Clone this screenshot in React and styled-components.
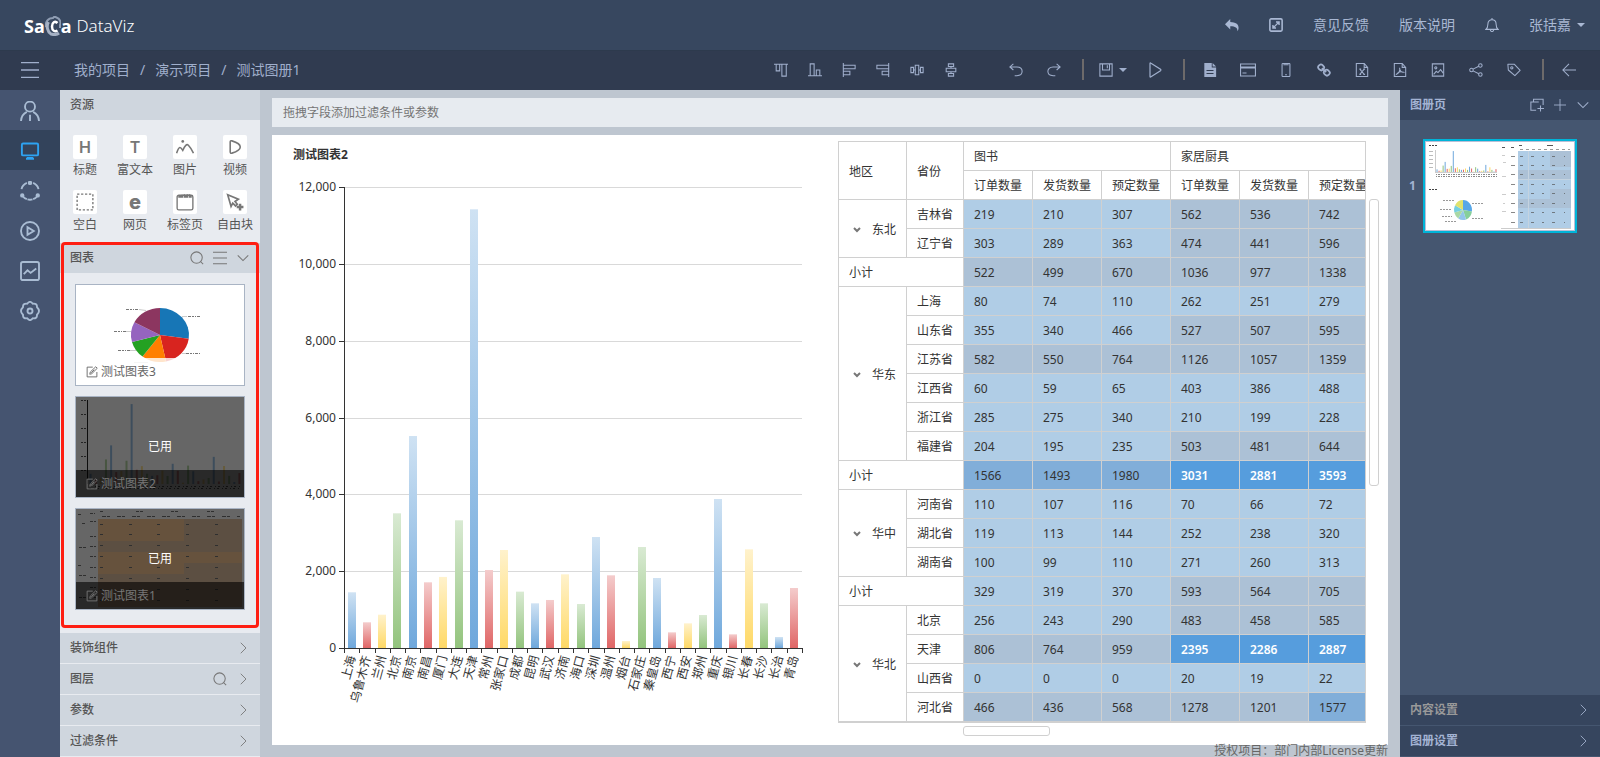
import { useState } from 'react';
import styled, { createGlobalStyle, css } from 'styled-components';

const cities = [
  ['上海', 1450],
  ['乌鲁木齐', 669],
  ['兰州', 867],
  ['北京', 3506],
  ['南京', 5518],
  ['南昌', 1710],
  ['厦门', 1850],
  ['大连', 3324],
  ['天津', 11419],
  ['常州', 2030],
  ['张家口', 2551],
  ['成都', 1467],
  ['昆明', 1163],
  ['武汉', 1250],
  ['济南', 1918],
  ['海口', 1145],
  ['深圳', 2889],
  ['温州', 1892],
  ['烟台', 182],
  ['石家庄', 2629],
  ['秦皇岛', 1822],
  ['西宁', 408],
  ['西安', 642],
  ['郑州', 859],
  ['重庆', 3878],
  ['银川', 356],
  ['长春', 2568],
  ['长沙', 1163],
  ['长治', 286],
  ['青岛', 1562],
];

const series = [
  { id: 'blue', from: '#cfe2f3', to: '#6fa8dc' },
  { id: 'red', from: '#f4cccc', to: '#e06666' },
  { id: 'yellow', from: '#fff2cc', to: '#ffd966' },
  { id: 'green', from: '#d9ead3', to: '#93c47d' },
];

const regions = [
  {
    name: '东北',
    rows: [
      ['吉林省', 219, 210, 307, 562, 536, 742],
      ['辽宁省', 303, 289, 363, 474, 441, 596],
    ],
    total: [522, 499, 670, 1036, 977, 1338],
  },
  {
    name: '华东',
    rows: [
      ['上海', 80, 74, 110, 262, 251, 279],
      ['山东省', 355, 340, 466, 527, 507, 595],
      ['江苏省', 582, 550, 764, 1126, 1057, 1359],
      ['江西省', 60, 59, 65, 403, 386, 488],
      ['浙江省', 285, 275, 340, 210, 199, 228],
      ['福建省', 204, 195, 235, 503, 481, 644],
    ],
    total: [1566, 1493, 1980, 3031, 2881, 3593],
  },
  {
    name: '华中',
    rows: [
      ['河南省', 110, 107, 116, 70, 66, 72],
      ['湖北省', 119, 113, 144, 252, 238, 320],
      ['湖南省', 100, 99, 110, 271, 260, 313],
    ],
    total: [329, 319, 370, 593, 564, 705],
  },
  {
    name: '华北',
    rows: [
      ['北京', 256, 243, 290, 483, 458, 585],
      ['天津', 806, 764, 959, 2395, 2286, 2887],
      ['山西省', 0, 0, 0, 20, 19, 22],
      ['河北省', 466, 436, 568, 1278, 1201, 1577],
    ],
  },
];

const measures = ['订单数量', '发货数量', '预定数量'];

// lower bounds of the three upper colour bands, one set for each measure
const bands = [
  [450, 1500, 2300],
  [420, 1400, 2200],
  [550, 1500, 2500],
];
const bandColors = ['#b0cde6', '#acc1d6', '#81aed9', '#569ddd'];
const getBand = (value, i) => bands[i % 3].filter((limit) => value >= limit).length;

/* ---------- icons ---------- */

const icons = {
  menu: <path d="M0 1.5h16M0 8h16M0 14.5h16" />,
  user: (
    <>
      <circle cx="8" cy="4.5" r="4" />
      <path d="M.8 16c.2-3.400 2-6 4.700-7.300M15.2 16c-.2-3.400-2-6-4.700-7.300M8 11v5" />
    </>
  ),
  monitor: (
    <>
      <rect x="1.500" y="2" width="13" height="9.500" rx="1" />
      <path d="M5.500 13.500h5M4.800 14.200h6.400" />
    </>
  ),
  ring: (
    <>
      <path d="M10.5 1.5a7 7 0 0 1 4.300 5M14 12a7 7 0 0 1-3.500 2.500M5.500 14.500A7 7 0 0 1 2 12M1.200 6.500a7 7 0 0 1 4.300-5M6 14.700q2 .6 4 0" />
      <circle cx="8" cy="1.500" r="1" fill="currentColor" />
      <circle cx="1.800" cy="11.500" r="1" fill="currentColor" />
      <circle cx="14.200" cy="11.500" r="1" fill="currentColor" />
    </>
  ),
  playCircle: (
    <>
      <circle cx="8" cy="8" r="7.200" />
      <path d="M6 5v6l5-3z" />
    </>
  ),
  trend: (
    <>
      <rect x=".8" y=".8" width="14.400" height="14.400" rx="1.500" />
      <path d="M3 10.5l3-3 2.500 2L13 6" />
    </>
  ),
  gear: (
    <>
      <path
        strokeLinejoin="round"
        d="M5.800 2.200Q8-.8 10.200 2.200Q13.800 1.700 13.600 5Q16.800 8 13.600 11Q13.800 14.300 10.200 13.800Q8 16.800 5.800 13.800Q2.200 14.300 2.400 11Q-.8 8 2.400 5Q2.200 1.700 5.800 2.200z"
      />
      <circle cx="8" cy="8" r="2" />
    </>
  ),
  reply: <path fill="currentColor" stroke="none" d="M6 1v3.500c6 .1 9.500 2.500 9.500 6.500 0 1.700-.6 3-1.300 4 .2-4-2.200-5.700-8.200-5.700V13L0 7z" />,
  expand: (
    <>
      <rect x="1" y="1" width="14" height="14" rx="1.500" strokeWidth="1.800" />
      <path d="M5 11l6-6M8 4.500h3.500V8M4.500 8v3.500H8" strokeWidth="1.600" />
    </>
  ),
  bell: (
    <>
      <path d="M1 13h14c-2-1.500-2.300-3-2.300-6C12.700 4 10.700 2 8 2S3.300 4 3.300 7c0 3-.3 4.500-2.300 6z" />
      <path d="M8 0v2M6 13.500c.3 2.600 3.700 2.600 4 0" />
    </>
  ),
  alignTop: <path d="M0 1.5h16M2.500 2v7h4V2M9 2v13h5V2" />,
  alignBottom: <path d="M0 14.500h16M2.500 14V1h4.500v13M9.500 14V8h4v6" />,
  alignLeft: <path d="M1.500 0v16M2 2.500h13v4H2M2 9.500h7v4H2" />,
  alignRight: <path d="M14.500 0v16M14 2.500H1v4h13M14 9.500H7v4h7" />,
  distributeH: <path d="M6 2.500h4v11H6zM1 5h3v6H1zM12 5h3v6h-3zM4 8h2M10 8h2" />,
  distributeV: <path d="M2.500 6h11v4h-11zM5 1h6v3H5zM5 12h6v3H5zM8 4v2M8 10v2" />,
  undo: <path d="M5 1L1 4.500 5 8M1.500 4.500H9c8 0 8 10 0 10H6.500" />,
  redo: <path d="M11 1l4 3.500L11 8M14.500 4.500H7c-8 0-8 10 0 10h2.500" />,
  save: (
    <>
      <path d="M1 1h14v14H1zM4 1v7h8V1" />
      <path d="M9.500 2.500V6" />
    </>
  ),
  play: <path d="M3 1.500v13q0 1 1 .3l9.500-6.100q.8-.7 0-1.400L4 1.200q-1-.7-1 .3z" />,
  doc: (
    <>
      <path fill="currentColor" stroke="none" d="M1.500 0H10v5h5v11H1.500zM11 0l4 4h-4z" />
      <path stroke="#303b50" d="M4 8.500h8M4 12h8" />
    </>
  ),
  card: <path d="M.5 2h15v12H.5zM0 5h16M0 6h16M2.500 11h4" />,
  phone: (
    <>
      <rect x="3.500" y=".5" width="9" height="15" rx="1" />
      <path d="M7 13.500h2M5 2h6" />
    </>
  ),
  link: (
    <>
      <rect x="1.500" y="2" width="6.500" height="6" rx="2.500" transform="rotate(45 4.700 5)" strokeWidth="2" />
      <rect x="8" y="8" width="6.500" height="6" rx="2.500" transform="rotate(45 11.200 11)" strokeWidth="2" />
      <path d="M5.500 6l5 4.500" strokeWidth="2" />
    </>
  ),
  excel: (
    <>
      <path d="M1.500.5h9l4 4.500v10.500h-13zM10.500.5V5h4" />
      <path d="M5.500 7l5 6M10.500 7l-5 6M5 7h2M9.500 7h2M5 13h2M9.500 13h2" />
    </>
  ),
  pdf: (
    <>
      <path d="M1.500.5h9l4 4.500v10.500h-13zM10.500.5V5h4" />
      <path d="M7.500 5.500c1 3-1 6.500-3.500 7.500 1.500-2.500 5-3.500 8-2.500-2 .5-4.500-1.500-4.500-5z" />
    </>
  ),
  picture: (
    <>
      <path d="M1.500 1h13v14h-13z" />
      <circle cx="5.500" cy="5.500" r="1.200" />
      <path d="M3 13l3-3.500L8 11l3-3.500 3 4" />
    </>
  ),
  share: (
    <>
      <circle cx="2.800" cy="8" r="2" />
      <circle cx="13" cy="2.800" r="2" />
      <circle cx="13" cy="13.200" r="2" />
      <path d="M4.600 7l6.600-3.300M4.600 9l6.600 3.300" />
    </>
  ),
  tag: (
    <>
      <path d="M1 1.500h7.500L15 8.500l-6 6L1.500 8z" strokeLinejoin="round" />
      <circle cx="5.500" cy="5.500" r="1.300" />
    </>
  ),
  back: <path d="M16 8H1M8 1L1 8l7 7" />,
  search: (
    <>
      <circle cx="7.500" cy="7.500" r="6.500" />
      <path d="M12 12l3 3" />
    </>
  ),
  down: <path d="M2 5l6 6 6-6" />,
  right: <path d="M5 1l7 7-7 7" />,
  plus: <path d="M8 0v16M0 8h16" />,
  addPage: <path d="M4 4V1.500h11V8M10 4.500H1V14h6M12 8.500v7M8.500 12H16" />,
  edit: <path d="M9 1.500H1.500v13h13V8M5 11l.7-3L13 1l2 2-7.300 7.300zM7 9l4-4" />,
  image: (
    <>
      <circle cx="6" cy="3" r="1.200" fill="currentColor" stroke="none" />
      <path d="M.5 13.500c2.500-7 3.500-5.500 5.500-2.500 2-4.500 3.500-6 5-4.500s3 4 4.500 7" strokeWidth="1.400" />
    </>
  ),
  video: <path d="M2.500 2.500v11q0 2 2 1.500c5-1.500 9.500-4.500 9.500-7S9.500 2.500 4.500 1q-2-.5-2 1.500z" strokeWidth="1.800" />,
  blank: <path d="M1 1h14v14H1z" strokeDasharray="2 1.500" />,
  tabs: (
    <>
      <rect x="1" y="2" width="14" height="13" rx="1.500" />
      <path d="M2 3.500h3.500v-2M7.500 1v2.500h2.500V1M12 1v2.500h2" strokeWidth="1.500" />
    </>
  ),
  freeBlock: (
    <>
      <path d="M1.500 1.500l9.500 4-3 2 2 2.500-1.500 1.500L6 9l-1.500 3z" strokeWidth="1.500" />
      <path d="M12.500 9.500v6M9.500 12.500h6" strokeWidth="2.200" />
    </>
  ),
};

const Icon = ({ name, size = 14 }) => (
  <Svg viewBox="0 0 16 16" $size={size} aria-hidden="true">
    {icons[name]}
  </Svg>
);

/* ---------- charts ---------- */

const CHART = { left: 72, top: 12, bottom: 473, width: 458 };

const BarChart = () => {
  const step = CHART.width / cities.length;
  const height = CHART.bottom - CHART.top;
  const ticks = [0, 2000, 4000, 6000, 8000, 10000, 12000];

  return (
    <ChartSvg viewBox="0 0 558 570" preserveAspectRatio="xMidYMin meet">
      <defs>
        {series.map((s) => (
          <linearGradient key={s.id} id={s.id} x1="0" y1="0" x2="0" y2="1">
            <stop offset="0" stopColor={s.from} />
            <stop offset="1" stopColor={s.to} />
          </linearGradient>
        ))}
      </defs>
      {ticks.map((value) => {
        const y = Math.round(CHART.bottom - (value / 12000) * height) + 0.5;
        return (
          <g key={value}>
            {value > 0 && <line x1={CHART.left} x2={CHART.left + CHART.width} y1={y} y2={y} stroke="#d9d9d9" />}
            <line x1={CHART.left - 5} x2={CHART.left} y1={y} y2={y} stroke="#333" />
            <text x={CHART.left - 8} y={y + 3} textAnchor="end">
              {value.toLocaleString('en-US')}
            </text>
          </g>
        );
      })}
      {cities.map(([name, value], i) => {
        const center = CHART.left + step * (i + 0.5);
        const h = (value / 12000) * height;
        return (
          <g key={name}>
            <rect x={Math.round(center - 4)} y={CHART.bottom - h} width="8" height={h} fill={`url(#${series[i % 4].id})`} />
            <text textAnchor="end" transform={`translate(${center + 4} ${CHART.bottom + 9}) rotate(-75)`}>
              {name}
            </text>
          </g>
        );
      })}
      <g stroke="#333">
        <line x1={CHART.left + 0.5} x2={CHART.left + 0.5} y1={CHART.top} y2={CHART.bottom + 1} />
        <line x1={CHART.left} x2={CHART.left + CHART.width} y1={CHART.bottom + 0.5} y2={CHART.bottom + 0.5} />
        {[...cities, null].map((_, i) => {
          const x = Math.round(CHART.left + step * i) + 0.5;
          return <line key={i} x1={x} x2={x} y1={CHART.bottom} y2={CHART.bottom + 5} />;
        })}
      </g>
    </ChartSvg>
  );
};

const Pie = ({ cx, cy, rx, ry, slices }) => {
  const point = (deg) => {
    const rad = (deg * Math.PI) / 180;
    return `${cx + rx * Math.sin(rad)} ${cy - ry * Math.cos(rad)}`;
  };
  return slices.map(([color, from, to]) => (
    <path key={color} fill={color} d={`M${cx} ${cy}L${point(from)}A${rx} ${ry} 0 0 1 ${point(to)}z`} />
  ));
};

const MiniBars = ({ x, y, width, height, bar }) =>
  cities.map(([name, value], i) => {
    const h = (value / 12000) * height;
    return (
      <rect
        key={name}
        x={x + (width / cities.length) * (i + 0.5) - bar / 2}
        y={y - h}
        width={bar}
        height={h}
        fill={series[i % 4].to}
      />
    );
  });

const PiePreview = () => (
  <PreviewSvg viewBox="0 0 168 100" preserveAspectRatio="none">
    <Pie
      cx={84}
      cy={50}
      rx={29}
      ry={27}
      slices={[
        ['#1776b6', 0, 98],
        ['#d8241f', 98, 168],
        ['#ff7f00', 168, 217],
        ['#24a122', 217, 255],
        ['#9564bf', 255, 298],
        ['#8c3660', 298, 360],
      ]}
    />
    <g stroke="#777" strokeDasharray="3 1 2 1 1 1">
      <path d="M50 24.500h13M112 31.500h12M110 68.500h14M38 46.500h12M42 65.500h12" />
    </g>
    <path d="M63 24.500l7 1M106 31.500h5M106 68.500h4M50 46.500h5M54 65.500h6M58 77.500h14" stroke="#ccc" />
  </PreviewSvg>
);

const BarPreview = () => (
  <PreviewSvg viewBox="0 0 168 100" preserveAspectRatio="none">
    <g opacity=".7">
      <MiniBars x={12} y={87} width={154} height={84} bar={2} />
    </g>
    <path d="M11.500 3v84" stroke="#222" />
    <path d="M5 3.500h5M5 17.500h5M5 31.500h5M5 45.500h5M5 59.500h5M5 73.500h5" stroke="#555" strokeDasharray="2 1" />
    <path d="M14 89.500h152M13 91.500h152" stroke="#666" strokeDasharray="2 3 1 2" />
  </PreviewSvg>
);

const TablePreview = () => (
  <PreviewSvg viewBox="0 0 168 100" preserveAspectRatio="none">
    <path d="M22 10h144v88H22z" fill="#ffcc99" />
    <path d="M108 10h58v22h-58zM22 32h144v11H22zM108 54h58v11h-58zM22 65h144v33H22z" fill="#e6c6a5" />
    <g stroke="#777" strokeDasharray="3 1">
      <path d="M24 2.500h4M60 2.500h8M95 2.500h8M131 2.500h8" />
      <path d="M26 7.500h138" strokeDasharray="4 1 3 7" />
      <path d="M2 5.500h3M14 4.500h5M14 12.500h6M14 27.500h6M14 37.500h6M14 47.500h6M14 58.500h6M14 68.500h6M14 78.500h6M14 88.500h6" />
      <path d="M6 14.500h4M3 38.500h7M2 56.500h4M3 66.500h7M3 88.500h7" />
      {[15, 25, 36, 47, 58, 69, 80, 91].map((y) => (
        <path key={y} d={`M24 ${y}.5h3M53 ${y}.5h3M81 ${y}.5h3M110 ${y}.5h3M139 ${y}.5h3`} />
      ))}
    </g>
  </PreviewSvg>
);

const PagePreview = () => (
  <PreviewSvg viewBox="0 0 148 88" preserveAspectRatio="none">
    <MiniBars x={10} y={30} width={61} height={22} bar={1} />
    <path d="M9.500 8v22M9 30.500h62" stroke="#ccc" />
    <path d="M3 3.500h8M3 47.500h8" stroke="#444" strokeDasharray="2 1" />
    <path d="M3 9.500h4M3 13.500h4M3 17.500h4M3 21.500h4M3 25.500h4" stroke="#bbb" />
    <path d="M10 32.500h61M10 34.500h61" stroke="#888" strokeDasharray="1 1 2 1" />
    <Pie
      cx={37}
      cy={68}
      rx={9}
      ry={10}
      slices={[
        ['#57a7e8', 0, 98],
        ['#86cf9b', 98, 160],
        ['#93c5ea', 160, 212],
        ['#a9d8a5', 212, 255],
        ['#76d0e0', 255, 298],
        ['#e0e26d', 298, 360],
      ]}
    />
    <path d="M17 58.500h12M46 61.500h12M46 76.500h12M14 67.500h12M16 74.500h10M19 79.500h12" stroke="#999" strokeDasharray="2 1" />
    <path d="M92 9h53v77H92z" fill="#b0cde6" />
    <path d="M124 9h21v16h-21zM92 28h53v9H92zM124 47h21v10h-21zM92 57h53v9H92z" fill="#acc1d6" />
    <path d="M102.500 9v77M92 37.500h53" stroke="#c4d3e0" />
    <g stroke="#555">
      <path d="M93 3.500h3M121 3.500h6" />
      <path d="M76 5.500h3M85 5.500h3" />
      <path d="M94 7.500h50" strokeDasharray="3 3" stroke="#999" />
      {[14, 23, 32, 42, 51, 61, 70, 80].map((y) => (
        <path key={y} d={`M85 ${y}.5h4M94 ${y}.5h3M105 ${y}.5h3M116 ${y}.5h2M126 ${y}.5h3M138 ${y}.5h1`} strokeOpacity=".7" />
      ))}
    </g>
    <path d="M76 13.500h3M77 20.500h3M76 34.500h4M76 52.500h4M77 61.500h2M76 69.500h4M75 86.500h70" stroke="#ccc" />
  </PreviewSvg>
);

/* ---------- page parts ---------- */

const PivotTable = () => (
  <TableArea>
    <TableFrame>
      <Table>
        <colgroup>
          <Col $width={68} />
          <Col $width={57} />
          <Col $width={69} span={6} />
        </colgroup>
        <thead>
          <tr>
            <HeadCell rowSpan={2}>地区</HeadCell>
            <HeadCell rowSpan={2}>省份</HeadCell>
            <HeadCell colSpan={3}>图书</HeadCell>
            <HeadCell colSpan={3}>家居厨具</HeadCell>
          </tr>
          <tr>
            {[...measures, ...measures].map((name, i) => (
              <HeadCell key={i}>{name}</HeadCell>
            ))}
          </tr>
        </thead>
        {regions.map((region) => (
          <tbody key={region.name}>
            {region.rows.map(([province, ...values], r) => (
              <tr key={province}>
                {r === 0 && (
                  <HeadCell rowSpan={region.rows.length}>
                    <RegionToggle type="button">
                      <ToggleMark viewBox="0 0 8 6" aria-hidden="true">
                        <path d="M1 1l3 3 3-3" />
                      </ToggleMark>
                      {region.name}
                    </RegionToggle>
                  </HeadCell>
                )}
                <HeadCell>{province}</HeadCell>
                {values.map((value, i) => (
                  <ValueCell key={i} $band={getBand(value, i)}>
                    {value}
                  </ValueCell>
                ))}
              </tr>
            ))}
            {region.total && (
              <tr>
                <HeadCell colSpan={2}>小计</HeadCell>
                {region.total.map((value, i) => (
                  <ValueCell key={i} $band={getBand(value, i)}>
                    {value}
                  </ValueCell>
                ))}
              </tr>
            )}
          </tbody>
        ))}
      </Table>
    </TableFrame>
    <ScrollV />
    <ScrollH />
  </TableArea>
);

const railItems = [
  ['user', '用户'],
  ['monitor', '图册'],
  ['ring', '关系'],
  ['playCircle', '播放'],
  ['trend', '分析'],
  ['gear', '设置'],
];

const resources = [
  { label: '标题', glyph: 'H' },
  { label: '富文本', glyph: 'T' },
  { label: '图片', icon: 'image', size: 18 },
  { label: '视频', icon: 'video', size: 14 },
  { label: '空白', icon: 'blank', size: 18 },
  { label: '网页', glyph: 'e', heavy: true },
  { label: '标签页', icon: 'tabs', size: 18 },
  { label: '自由块', icon: 'freeBlock', size: 18 },
];

const alignTools = [
  ['alignTop', '顶部对齐'],
  ['alignBottom', '底部对齐'],
  ['alignLeft', '左对齐'],
  ['alignRight', '右对齐'],
  ['distributeH', '水平分布'],
  ['distributeV', '垂直分布'],
];

const exportTools = [
  ['doc', '文档'],
  ['card', '卡片'],
  ['phone', '手机预览'],
  ['link', '链接'],
  ['excel', '导出Excel'],
  ['pdf', '导出PDF'],
  ['picture', '导出图片'],
  ['share', '分享'],
  ['tag', '标签'],
];

const charts = [
  { name: '测试图表3', preview: <PiePreview /> },
  { name: '测试图表2', preview: <BarPreview />, used: true },
  { name: '测试图表1', preview: <TablePreview />, used: true },
];

const App = () => {
  const [active, setActive] = useState('monitor');

  return (
    <>
      <GlobalStyle />
      <Page>
        <Header>
          <Logo href="#">
            <LogoStrong>Sa</LogoStrong>
            <LogoMark viewBox="0 0 16 20" aria-hidden="true">
              <path d="M1 11C0 6 3 2 8 2l1.500-1.500 2 1C15 3 16 6 15 9v3" fill="none" stroke="#8f9db3" strokeWidth="2" />
              <path d="M3.500 6C1 10 2.500 16 6 18c3 1 6 .5 8-1" fill="none" stroke="#a5b1c4" strokeWidth="3" />
              <path d="M12.500 7C10 4.500 7 6.500 7 10.500c0 4.500 3 5.500 5.500 4" fill="none" stroke="#fff" strokeWidth="2.500" />
            </LogoMark>
            <LogoStrong>a</LogoStrong>
            <LogoLight>DataViz</LogoLight>
          </Logo>
          <HeaderNav>
            <PlainButton aria-label="返回">
              <Icon name="reply" />
            </PlainButton>
            <PlainButton aria-label="全屏">
              <Icon name="expand" />
            </PlainButton>
            <NavLink href="#">意见反馈</NavLink>
            <NavLink href="#">版本说明</NavLink>
            <PlainButton aria-label="通知">
              <Icon name="bell" />
            </PlainButton>
            <PlainButton>
              张括嘉
              <Caret />
            </PlainButton>
          </HeaderNav>
        </Header>

        <Toolbar>
          <MenuButton aria-label="菜单">
            <Icon name="menu" size={18} />
          </MenuButton>
          <Breadcrumb>
            <NavLink href="#">我的项目</NavLink>
            <span>/</span>
            <NavLink href="#">演示项目</NavLink>
            <span>/</span>
            <NavLink href="#">测试图册1</NavLink>
          </Breadcrumb>
          <ToolGroup>
            {alignTools.map(([icon, label]) => (
              <ToolButton key={icon} $width={34} aria-label={label}>
                <Icon name={icon} />
              </ToolButton>
            ))}
          </ToolGroup>
          <ToolGroup $spaced>
            <ToolButton aria-label="撤销">
              <Icon name="undo" />
            </ToolButton>
            <ToolButton aria-label="重做">
              <Icon name="redo" />
            </ToolButton>
          </ToolGroup>
          <Divider />
          <ToolGroup>
            <ToolButton $width={46} aria-label="保存">
              <Icon name="save" />
              <Caret />
            </ToolButton>
            <ToolButton aria-label="预览">
              <Icon name="play" size={16} />
            </ToolButton>
          </ToolGroup>
          <Divider />
          <ToolGroup>
            {exportTools.map(([icon, label]) => (
              <ToolButton key={icon} aria-label={label}>
                <Icon name={icon} size={icon === 'card' ? 16 : 14} />
              </ToolButton>
            ))}
          </ToolGroup>
          <Divider />
          <ToolButton aria-label="返回上级">
            <Icon name="back" />
          </ToolButton>
        </Toolbar>

        <Body>
          <Rail>
            {railItems.map(([icon, label]) => (
              <RailButton key={icon} $active={icon === active} aria-label={label} onClick={() => setActive(icon)}>
                <Icon name={icon} size={20} />
              </RailButton>
            ))}
          </Rail>

          <SidePanel>
            <SectionHead>
              <SectionTitle>资源</SectionTitle>
            </SectionHead>
            <ResourceGrid>
              {resources.map(({ label, glyph, heavy, icon, size }) => (
                <Resource key={label}>
                  <Tile>{glyph ? <Glyph $heavy={heavy}>{glyph}</Glyph> : <Icon name={icon} size={size} />}</Tile>
                  {label}
                </Resource>
              ))}
            </ResourceGrid>

            <ChartSection>
              <SectionHead>
                <SectionTitle>图表</SectionTitle>
                <Action aria-label="搜索">
                  <Icon name="search" />
                </Action>
                <Action aria-label="列表">
                  <Icon name="menu" />
                </Action>
                <Action aria-label="收起">
                  <Icon name="down" />
                </Action>
              </SectionHead>
              <CardList>
                {charts.map(({ name, preview, used }) => (
                  <Card key={name}>
                    {preview}
                    {used && <UsedMask>已用</UsedMask>}
                    <Caption $used={used}>
                      <Icon name="edit" size={12} />
                      {name}
                    </Caption>
                  </Card>
                ))}
              </CardList>
              <Highlight />
            </ChartSection>

            {['装饰组件', '图层', '参数', '过滤条件'].map((title) => (
              <SectionHead key={title} $closed>
                <SectionTitle>{title}</SectionTitle>
                {title === '图层' && (
                  <Action aria-label="搜索图层">
                    <Icon name="search" />
                  </Action>
                )}
                <Action aria-label={`展开${title}`}>
                  <Icon name="right" size={12} />
                </Action>
              </SectionHead>
            ))}
          </SidePanel>

          <Canvas>
            <FilterBar>拖拽字段添加过滤条件或参数</FilterBar>
            <Sheet>
              <ChartArea>
                <ChartTitle>测试图表2</ChartTitle>
                <BarChart />
              </ChartArea>
              <PivotTable />
            </Sheet>
            <License>授权项目：部门内部License更新</License>
          </Canvas>

          <PagePanel>
            <PageHead>
              <SectionTitle>图册页</SectionTitle>
              <Action $light aria-label="复制页">
                <Icon name="addPage" />
              </Action>
              <Action $light aria-label="新增页">
                <Icon name="plus" size={12} />
              </Action>
              <Action $light aria-label="收起">
                <Icon name="down" />
              </Action>
            </PageHead>
            <PageList>
              <li>
                <span>1</span>
                <PageThumb aria-label="第1页">
                  <PagePreview />
                </PageThumb>
              </li>
            </PageList>
            <PageHead $closed $muted>
              <SectionTitle>内容设置</SectionTitle>
              <Action $light aria-label="展开内容设置">
                <Icon name="right" size={12} />
              </Action>
            </PageHead>
            <PageHead $closed>
              <SectionTitle>图册设置</SectionTitle>
              <Action $light aria-label="展开图册设置">
                <Icon name="right" size={12} />
              </Action>
            </PageHead>
          </PagePanel>
        </Body>
      </Page>
    </>
  );
};

/* ---------- styles ---------- */

const GlobalStyle = createGlobalStyle`
  * {
    box-sizing: border-box;
  }
  body {
    margin: 0;
    font-family: 'Noto Sans', 'Noto Sans CJK SC', sans-serif;
    font-size: 12px;
    line-height: 16px;
    color: #333;
  }
  button {
    margin: 0;
    padding: 0;
    border: 0;
    background: none;
    color: inherit;
    font: inherit;
    cursor: pointer;
  }
  a {
    color: inherit;
    text-decoration: none;
  }
`;

const Svg = styled.svg`
  flex: none;
  display: block;
  width: ${(p) => p.$size}px;
  height: ${(p) => p.$size}px;
  fill: none;
  stroke: currentColor;
  stroke-width: 1.2;
`;

const Page = styled.div`
  display: flex;
  flex-direction: column;
  height: 100vh;
  overflow: hidden;
`;

const Header = styled.header`
  flex: none;
  display: flex;
  align-items: center;
  justify-content: space-between;
  height: 50px;
  padding: 0 15px 0 24px;
  background: #37475f;
  color: #a9b8d3;
  font-size: 14px;
`;

const Logo = styled.a`
  display: flex;
  align-items: center;
  color: #fff;
  line-height: 24px;
  padding-top: 2px;
`;

const LogoStrong = styled.strong`
  font-size: 18px;
  font-weight: 700;
`;

const LogoMark = styled.svg`
  width: 16px;
  height: 20px;
`;

const LogoLight = styled.span`
  margin-left: 5px;
  font-size: 17px;
  font-weight: 300;
`;

const HeaderNav = styled.nav`
  display: flex;
  align-items: center;
  gap: 30px;
`;

const NavLink = styled.a`
  white-space: nowrap;
`;

const PlainButton = styled.button`
  display: flex;
  align-items: center;
  gap: 6px;
`;

const Caret = styled.span`
  border: 4px solid transparent;
  border-top-color: currentColor;
  border-bottom-width: 0;
`;

const Toolbar = styled.div`
  flex: none;
  display: flex;
  align-items: center;
  height: 40px;
  padding: 0 12px 2px 0;
  background: #303b50;
  border-top: 1px solid #2d3a4d;
  color: #a0afcc;
`;

const MenuButton = styled.button`
  display: flex;
  justify-content: center;
  width: 60px;
`;

const Breadcrumb = styled.nav`
  flex: 1;
  display: flex;
  gap: 10px;
  padding-left: 14px;
  font-size: 14px;
`;

const ToolGroup = styled.div`
  display: flex;
  margin-left: ${(p) => (p.$spaced ? 29 : 0)}px;
`;

const ToolButton = styled.button`
  display: flex;
  align-items: center;
  justify-content: center;
  gap: 6px;
  width: ${(p) => p.$width || 38}px;
  height: 24px;
`;

const Divider = styled.span`
  width: 2px;
  height: 21px;
  margin: 0 6px 0 9px;
  background: #6d6a6a;
`;

const Body = styled.div`
  flex: 1;
  display: flex;
  min-height: 0;
`;

const Rail = styled.nav`
  flex: none;
  width: 60px;
  background: #455470;
`;

const RailButton = styled.button`
  display: flex;
  align-items: center;
  justify-content: center;
  width: 100%;
  height: 40px;
  padding-top: 2px;
  color: #a9bcd3;

  svg {
    stroke-width: 1.5;
  }

  ${(p) =>
    p.$active &&
    css`
      background: #33435b;
      color: #2ea3f2;
    `}
`;

const SidePanel = styled.aside`
  flex: none;
  display: flex;
  flex-direction: column;
  width: 200px;
  background: #e8ebf0;
  color: #555;
`;

const SectionHead = styled.div`
  flex: none;
  display: flex;
  align-items: center;
  gap: 9px;
  height: ${(p) => (p.$closed ? 31 : 30)}px;
  padding: 0 10px;
  background: #cfd6de;
  border-bottom: ${(p) => (p.$closed ? '1px solid #e8ebf0' : '0')};
`;

const SectionTitle = styled.h2`
  flex: 1;
  margin: 0;
  font-size: 12px;
  font-weight: 500;
`;

const Action = styled.button`
  display: flex;
  justify-content: center;
  width: 14px;
  color: ${(p) => (p.$light ? '#a0afcc' : '#777')};
`;

const ResourceGrid = styled.div`
  display: grid;
  grid-template-columns: repeat(4, 1fr);
  row-gap: 9px;
  padding: 15px 0 7px;
`;

const Resource = styled.button`
  display: flex;
  flex-direction: column;
  align-items: center;
  line-height: 22px;
  white-space: nowrap;
`;

const Tile = styled.span`
  display: flex;
  align-items: center;
  justify-content: center;
  width: 24px;
  height: 24px;
  background: #fff;
  border-radius: 2px;
  color: #777;
`;

const Glyph = styled.span`
  font-family: Inter, sans-serif;
  font-size: ${(p) => (p.$heavy ? 20 : 16)}px;
  font-weight: ${(p) => (p.$heavy ? 800 : 600)};
`;

const ChartSection = styled.section`
  position: relative;
  flex: 1;
`;

const CardList = styled.div`
  display: flex;
  flex-direction: column;
  gap: 10px;
  padding: 11px 15px;
`;

const Card = styled.div`
  position: relative;
  height: 102px;
  background: #fff;
  border: 1px solid #a9b4c4;
`;

const PreviewSvg = styled.svg`
  display: block;
  width: 100%;
  height: 100%;
  fill: none;
`;

const UsedMask = styled.div`
  position: absolute;
  inset: 0;
  display: flex;
  align-items: center;
  justify-content: center;
  background: rgba(0, 0, 0, 0.6);
  color: #fff;
`;

const Caption = styled.div`
  position: absolute;
  left: 0;
  right: 0;
  bottom: 0;
  display: flex;
  align-items: center;
  gap: 3px;
  height: 27px;
  padding-left: 10px;
  background: ${(p) => (p.$used ? 'rgba(0, 0, 0, 0.6)' : 'rgba(255, 255, 255, 0.8)')};
  color: ${(p) => (p.$used ? '#777' : '#666')};
`;

/* frame drawn over the open section */
const Highlight = styled.div`
  position: absolute;
  inset: -1px 1px 5px;
  border: 3px solid #fe1e12;
  border-radius: 4px;
  pointer-events: none;
`;

const Canvas = styled.main`
  flex: 1;
  display: flex;
  flex-direction: column;
  min-width: 0;
  padding: 8px 12px 0;
  background: #bec6d0;
`;

const FilterBar = styled.div`
  flex: none;
  display: flex;
  align-items: center;
  height: 29px;
  padding: 0 11px;
  margin-bottom: 8px;
  background: #e7ebf0;
  color: #757575;
`;

const Sheet = styled.div`
  flex: 1;
  display: grid;
  grid-template-columns: repeat(2, minmax(0, 1fr));
  min-height: 0;
  background: #fff;
  overflow: hidden;
`;

const ChartArea = styled.section`
  min-width: 0;
`;

const ChartTitle = styled.h3`
  margin: 0;
  padding-left: 21px;
  font-size: 12px;
  font-weight: 700;
  line-height: 40px;
`;

const ChartSvg = styled.svg`
  display: block;
  width: 100%;
  height: auto;

  text {
    fill: #333;
    font-size: 12px;
  }
`;

const TableArea = styled.section`
  display: grid;
  grid-template-columns: minmax(0, 1fr) 10px;
  grid-auto-rows: max-content;
  gap: 3px;
  min-width: 0;
  padding: 6px 9px 0 8px;
`;

const TableFrame = styled.div`
  border: 1px solid #d0d0d0;
  overflow: hidden;
`;

const Table = styled.table`
  width: 539px;
  table-layout: fixed;
  border-collapse: separate;
  border-spacing: 0;
`;

const Col = styled.col`
  width: ${(p) => p.$width}px;
`;

const cell = css`
  height: 29px;
  padding: 2px 0 0 10px;
  border: solid #d0d0d0;
  border-width: 0 1px 1px 0;
  text-align: left;
  white-space: nowrap;
`;

const HeadCell = styled.th`
  ${cell}
  font-weight: 400;
`;

const ValueCell = styled.td`
  ${cell}
  background: ${(p) => bandColors[p.$band]};
  color: ${(p) => (p.$band === 3 ? '#fff' : '#333')};
  font-weight: ${(p) => (p.$band === 3 ? 600 : 400)};
`;

const RegionToggle = styled.button`
  display: flex;
  align-items: center;
  gap: 11px;
  padding-left: 4px;
`;

const ToggleMark = styled.svg`
  width: 8px;
  height: 6px;
  fill: none;
  stroke: #777;
  stroke-width: 2;
`;

const scrollThumb = css`
  border: 1px solid #d0d0d0;
  border-radius: 3px;
  background: #fff;
`;

const ScrollV = styled.div`
  ${scrollThumb}
  height: 287px;
  margin-top: 58px;
`;

const ScrollH = styled.div`
  ${scrollThumb}
  width: 87px;
  height: 10px;
  margin-left: 125px;
`;

const License = styled.footer`
  flex: none;
  color: #666;
  line-height: 12px;
  text-align: right;
  white-space: nowrap;
`;

const PagePanel = styled.aside`
  flex: none;
  display: flex;
  flex-direction: column;
  width: 200px;
  background: #455670;
  color: #a3b3d3;
`;

const PageHead = styled(SectionHead)`
  background: #36455e;
  border-color: #455670;
  color: ${(p) => (p.$muted ? '#999' : '#a3b3d3')};

  ${SectionTitle} {
    font-weight: 700;
  }
`;

const PageList = styled.ol`
  flex: 1;
  margin: 0;
  padding: 19px 23px 0 9px;
  list-style: none;
  font-weight: 700;

  li {
    display: flex;
    align-items: center;
    justify-content: space-between;
  }
`;

const PageThumb = styled.button`
  width: 154px;
  height: 94px;
  border: 2px solid #00b4d8;
  outline: 1px solid #b9bfd6;
  outline-offset: -3px;
  background: #fff;
  padding: 1px;
`;

export default App;
